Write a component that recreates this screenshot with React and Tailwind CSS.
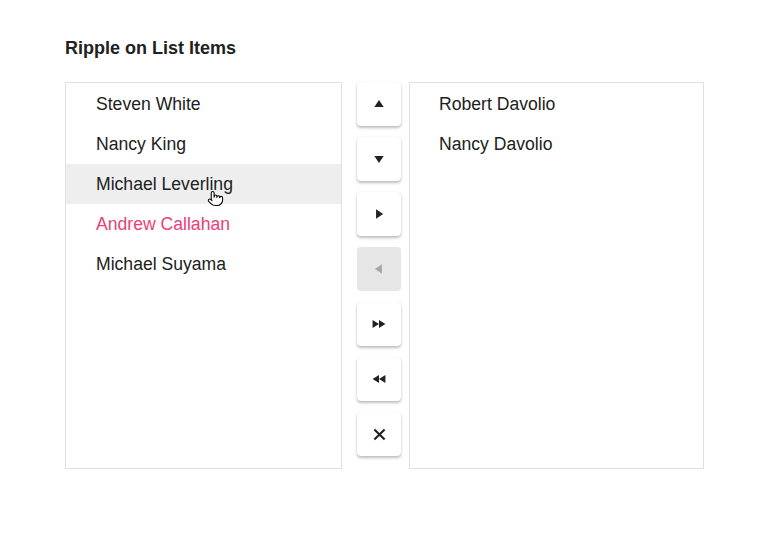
import { Pointer } from 'lucide-react';

const left = ['Steven White', 'Nancy King', 'Michael Leverling', 'Andrew Callahan', 'Michael Suyama'];
const right = ['Robert Davolio', 'Nancy Davolio'];

const Tri = ({ d }) => (
  <svg width="14" height="14" viewBox="0 0 12 12" className="fill-current">
    <path d={d} />
  </svg>
);

const buttons = [
  { icon: <Tri d="M6 2.5 L10 8.5 L2 8.5 Z" /> },
  { icon: <Tri d="M2 3.5 L10 3.5 L6 9.5 Z" /> },
  { icon: <Tri d="M3.5 2 L9.5 6 L3.5 10 Z" /> },
  { icon: <Tri d="M8.5 2 L2.5 6 L8.5 10 Z" />, disabled: true },
  { icon: <Tri d="M0.5 2.5 L6 6 L0.5 9.5 Z M6 2.5 L11.5 6 L6 9.5 Z" /> },
  { icon: <Tri d="M11.5 2.5 L6 6 L11.5 9.5 Z M6 2.5 L0.5 6 L6 9.5 Z" /> },
  {
    icon: (
      <svg width="13" height="13" viewBox="0 0 12 12" className="stroke-current" strokeWidth="2" strokeLinecap="square">
        <path d="M2 2 L10 10 M10 2 L2 10" />
      </svg>
    ),
  },
];

export default function App() {
  return (
    <div className="w-[770px] h-[533px] bg-white px-[65px] pt-[38px] text-[#212121]" style={{ fontFamily: '"Liberation Sans", Arial, sans-serif' }}>
      <h2 className="text-[18px] font-bold leading-5 text-[#212121]">Ripple on List Items</h2>
      <div className="flex mt-[24px] items-start">
        <ul className="w-[277px] h-[387px] border border-[#e0e0e0] py-[1px]">
          {left.map((n, i) => (
            <li
              key={n}
              className={`relative h-10 flex items-center pl-[30px] text-[17.6px] ${i === 2 ? 'bg-[#eeeeee]' : ''} ${i === 3 ? 'text-[#ec407a]' : 'text-[#212121]'}`}
            >
              {n}
              {i === 2 && (
                <span className="absolute left-[141px] top-[26px] text-black">
                  <Pointer size={17} strokeWidth={1.5} fill="white" />
                </span>
              )}
            </li>
          ))}
        </ul>
        <div className="flex flex-col gap-[11px] ml-[15px] mr-[8px]">
          {buttons.map((b, i) => (
            <button
              key={i}
              className={`w-[44px] h-[44px] flex items-center justify-center rounded-sm ${b.disabled ? 'bg-[#e6e6e6] text-[#a8a8a8]' : 'bg-white text-[#222] shadow-[0_2px_3px_rgba(0,0,0,0.25),0_0_1px_rgba(0,0,0,0.15)]'}`}
            >
              {b.icon}
            </button>
          ))}
        </div>
        <ul className="w-[295px] h-[387px] border border-[#e0e0e0] py-[1px]">
          {right.map(n => (
            <li key={n} className="h-10 flex items-center pl-[29px] text-[17.6px] text-[#212121]">{n}</li>
          ))}
        </ul>
      </div>
    </div>
  );
}
